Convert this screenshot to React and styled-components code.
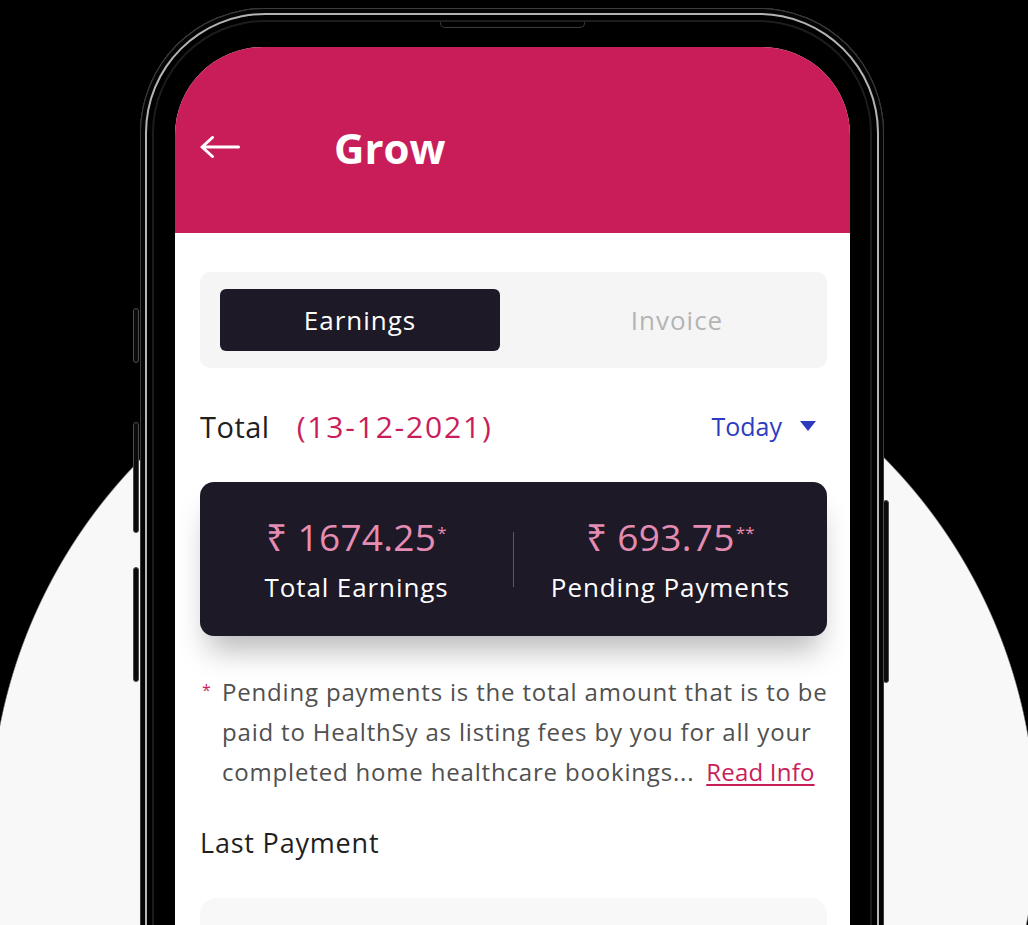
import React from 'react'
import styled, { createGlobalStyle } from 'styled-components'

const GlobalStyle = createGlobalStyle`
  html, body {
    margin: 0;
    padding: 0;
    background: #000;
    font-family: 'Open Sans', 'Noto Sans', 'DejaVu Sans', sans-serif;
  }
`

const Page = styled.div`
  width: 1028px;
  height: 925px;
  overflow: hidden;
  box-sizing: border-box;
  padding: 8px 0 0 140px;
  background: radial-gradient(circle 523px at 513px 826px, #f8f8f8 522px, #000 523.5px);
`

const Phone = styled.div`
  position: relative;
  width: 744px;
  height: 1000px;
  box-sizing: border-box;
  padding: 39px 34px 0 35px;
  background: #000;
  border-radius: 125px 125px 0 0;
  box-shadow: inset 0 0 0 1px #3c3c3c, inset 0 0 0 5px #050505,
    inset 0 0 0 7px #b4b4b4, inset 0 0 0 12px #000, inset 0 0 0 14px #1c1c1c;
`

const SideButton = styled.div`
  position: absolute;
  top: ${p => p.$top}px;
  height: ${p => p.$height}px;
  ${p => (p.$right ? 'right: -5px;' : 'left: -7px;')}
  width: 6px;
  box-sizing: border-box;
  background: #0b0b0b;
  border: 1px solid #4c4c4c;
  border-radius: 3px;
`

const Speaker = styled.div`
  position: absolute;
  top: 14px;
  left: 300px;
  width: 145px;
  height: 6px;
  box-sizing: border-box;
  border: 1px solid #3a3a3a;
  border-top: none;
  border-radius: 0 0 5px 5px;
`

const Screen = styled.div`
  height: 100%;
  background: #fff;
  border-radius: 88px 88px 0 0;
  overflow: hidden;
  display: flex;
  flex-direction: column;
`

const Header = styled.div`
  height: 186px;
  flex-shrink: 0;
  box-sizing: border-box;
  padding: 14px 25px 0;
  background: #c91d5a;
  display: flex;
  align-items: center;
  gap: 94px;
`

const BackButton = styled.div`
  display: flex;
  align-items: center;
  width: 40px;
  height: 22px;
`

const Title = styled.h1`
  margin: 0;
  color: #fff;
  font-size: 42px;
  font-weight: 700;
`

const Content = styled.div`
  padding: 39px 23px 0 25px;
  display: flex;
  flex-direction: column;
`

const Tabs = styled.div`
  height: 96px;
  box-sizing: border-box;
  padding: 17px 20px;
  background: #f5f5f6;
  border-radius: 10px;
  display: grid;
  grid-template-columns: 280px 280px;
  column-gap: 37px;
`

const Tab = styled.div`
  display: flex;
  align-items: center;
  justify-content: center;
  border-radius: 6px;
  font-size: 26px;
  letter-spacing: 1px;
  background: ${p => (p.$active ? '#1d1927' : 'transparent')};
  color: ${p => (p.$active ? '#fff' : '#b4b4b4')};
`

const TotalRow = styled.div`
  margin-top: 40px;
  height: 36px;
  display: flex;
  align-items: center;
  padding-right: 11px;
`

const TotalLabel = styled.span`
  font-size: 29px;
  letter-spacing: 0.5px;
  color: #1f1f1f;
`

const DateText = styled.span`
  margin-left: 27px;
  font-size: 30px;
  letter-spacing: 1.8px;
  color: #c91d5a;
`

const RangePicker = styled.div`
  margin-left: auto;
  display: flex;
  align-items: center;
  gap: 18px;
  font-size: 25px;
  color: #2d3cbf;
`

const Caret = styled.span`
  width: 0;
  height: 0;
  border-left: 8px solid transparent;
  border-right: 8px solid transparent;
  border-top: 10px solid #2d3cbf;
`

const SummaryCard = styled.div`
  margin-top: 38px;
  height: 154px;
  background: #1d1927;
  border-radius: 14px;
  display: grid;
  grid-template-columns: 1fr 1px 1fr;
  align-items: center;
  box-shadow: 0 22px 30px -8px rgba(0, 0, 0, 0.28);
`

const Stat = styled.div`
  display: flex;
  flex-direction: column;
  align-items: center;
  gap: 11px;
`

const Amount = styled.div`
  font-size: 37px;
  line-height: 44px;
  letter-spacing: 0.3px;
  color: #e58cb2;
`

const Stars = styled.sup`
  font-size: 17px;
  vertical-align: top;
  position: relative;
  top: -4px;
  margin-left: 1px;
`

const StatLabel = styled.div`
  font-size: 26px;
  line-height: 34px;
  letter-spacing: 0.9px;
  color: #fff;
`

const Divider = styled.div`
  height: 55px;
  background: #5c5866;
`

const Note = styled.div`
  margin-top: 36px;
  display: grid;
  grid-template-columns: 22px 1fr;
  font-size: 24px;
  line-height: 40px;
  letter-spacing: 0.82px;
  color: #505050;
  white-space: nowrap;
`

const NoteMark = styled.span`
  color: #c91d5a;
  font-size: 16px;
  line-height: 36px;
  padding-left: 2px;
`

const ReadInfo = styled.a`
  margin-left: 12px;
  color: #c91d5a;
  letter-spacing: 0.2px;
  text-decoration: underline;
  text-underline-offset: 3px;
`

const SectionTitle = styled.h2`
  margin: 33px 0 0;
  font-size: 27px;
  line-height: 36px;
  font-weight: 400;
  letter-spacing: 0.8px;
  color: #1f1f1f;
`

const PaymentCard = styled.div`
  margin-top: 37px;
  height: 200px;
  background: #f8f8f8;
  border-radius: 16px;
`

function BackArrow() {
  return (
    <svg width="40" height="22" viewBox="0 0 40 22" fill="none">
      <path
        d="M38.5 11H2.5M12.5 1.5L2 11l10.5 9.5"
        stroke="#fff"
        strokeWidth="3"
        strokeLinecap="round"
        strokeLinejoin="round"
      />
    </svg>
  )
}

export default function App() {
  return (
    <Page>
      <GlobalStyle />
      <Phone>
        <SideButton $top={300} $height={55} />
        <SideButton $top={414} $height={111} />
        <SideButton $top={559} $height={115} />
        <SideButton $right $top={492} $height={183} />
        <Speaker />
        <Screen>
          <Header>
            <BackButton>
              <BackArrow />
            </BackButton>
            <Title>Grow</Title>
          </Header>
          <Content>
            <Tabs>
              <Tab $active>Earnings</Tab>
              <Tab>Invoice</Tab>
            </Tabs>
            <TotalRow>
              <TotalLabel>Total</TotalLabel>
              <DateText>(13-12-2021)</DateText>
              <RangePicker>
                Today
                <Caret />
              </RangePicker>
            </TotalRow>
            <SummaryCard>
              <Stat>
                <Amount>
                  ₹ 1674.25<Stars>*</Stars>
                </Amount>
                <StatLabel>Total Earnings</StatLabel>
              </Stat>
              <Divider />
              <Stat>
                <Amount>
                  ₹ 693.75<Stars>**</Stars>
                </Amount>
                <StatLabel>Pending Payments</StatLabel>
              </Stat>
            </SummaryCard>
            <Note>
              <NoteMark>*</NoteMark>
              <span>
                Pending payments is the total amount that is to be
                <br />
                paid to HealthSy as listing fees by you for all your
                <br />
                completed home healthcare bookings...
                <ReadInfo href="#">Read Info</ReadInfo>
              </span>
            </Note>
            <SectionTitle>Last Payment</SectionTitle>
            <PaymentCard />
          </Content>
        </Screen>
      </Phone>
    </Page>
  )
}
